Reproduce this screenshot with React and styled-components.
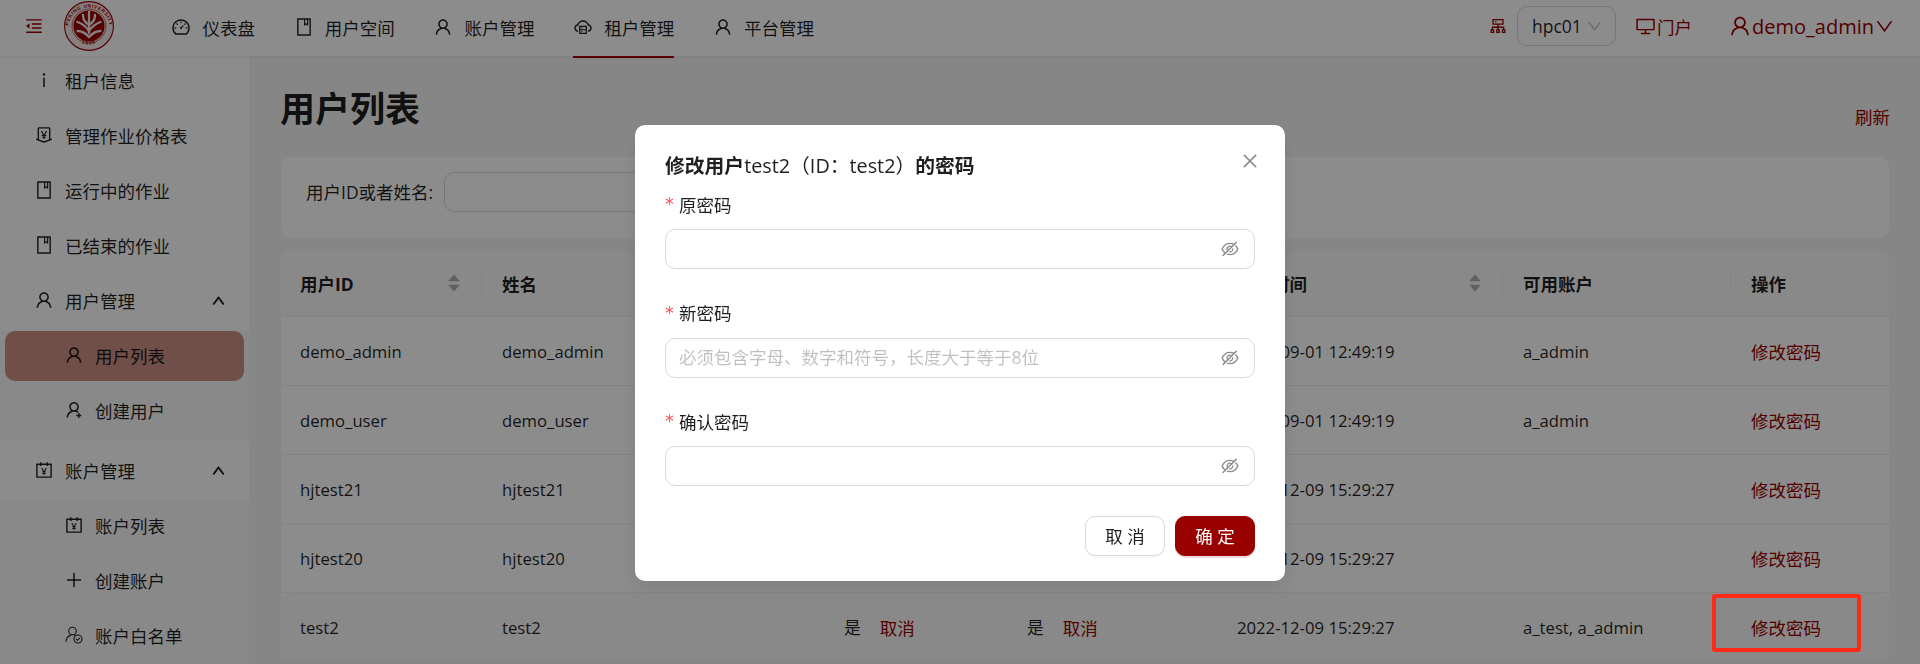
import styled, { createGlobalStyle } from "styled-components";
import {
  AiOutlineMenuFold, AiOutlineDashboard, AiOutlineBook, AiOutlineUser, AiOutlineCloudServer,
  AiOutlineCluster, AiOutlineDesktop, AiOutlineDown, AiOutlineUp, AiOutlineInfo, AiOutlineMoneyCollect,
  AiOutlineUserAdd, AiOutlineAccountBook, AiOutlinePlus, AiOutlineEyeInvisible, AiOutlineClose,
  AiFillCaretUp, AiFillCaretDown,
} from "react-icons/ai";

const RED = "#990000";

const GlobalStyle = createGlobalStyle`
  html, body { margin: 0; height: 100%; overflow: hidden; background: #f5f5f5; }
  body {
    font-family: "Open Sans", "Noto Sans CJK SC", sans-serif;
    font-size: 17.5px;
    color: rgba(0, 0, 0, 0.88);
  }
  * { box-sizing: border-box; }
`;

const navItems = [
  { icon: <AiOutlineDashboard />, label: "仪表盘" },
  { icon: <AiOutlineBook />, label: "用户空间" },
  { icon: <AiOutlineUser />, label: "账户管理" },
  { icon: <AiOutlineCloudServer />, label: "租户管理", active: true },
  { icon: <AiOutlineUser />, label: "平台管理" },
];

const users = [
  { id: "demo_admin", name: "demo_admin", time: "2022-09-01 12:49:19", accounts: "a_admin" },
  { id: "demo_user", name: "demo_user", time: "2022-09-01 12:49:19", accounts: "a_admin" },
  { id: "hjtest21", name: "hjtest21", time: "2022-12-09 15:29:27", accounts: "" },
  { id: "hjtest20", name: "hjtest20", time: "2022-12-09 15:29:27", accounts: "" },
  { id: "test2", name: "test2", time: "2022-12-09 15:29:27", accounts: "a_test, a_admin" },
];

function Logo() {
  return (
    <LogoSvg viewBox="0 0 50 50">
      <circle cx="25" cy="25" r="24.4" fill="#f6eaea" stroke={RED} strokeWidth="1.1" />
      <circle cx="25" cy="25" r="17" fill="none" stroke={RED} strokeWidth="0.6" />
      <path id="sealTop" d="M4.5 27a20.5 20.5 0 0 1 41 0" fill="none" />
      <path id="sealBottom" d="M10 36a18.5 18.5 0 0 0 30 0" fill="none" />
      <text fontSize="5" fontWeight="700" fill={RED} fontFamily="Liberation Sans, sans-serif" letterSpacing="0.5">
        <textPath href="#sealTop" startOffset="50%" textAnchor="middle">PEKING UNIVERSITY</textPath>
      </text>
      <text fontSize="5" fontWeight="700" fill={RED} fontFamily="Liberation Sans, sans-serif" letterSpacing="1">
        <textPath href="#sealBottom" startOffset="50%" textAnchor="middle">1898</textPath>
      </text>
      <circle cx="25" cy="25" r="15.6" fill={RED} />
      <g fill="none" stroke="#f6eaea" strokeWidth="2.3" strokeLinecap="round">
        <path d="M25 11v21" />
        <path d="M19 14c0 5 2 7 6 10c4-3 6-5 6-10" />
        <path d="M13.5 21c3 1 8 4 11.5 9c3.500-5 8.500-8 11.500-9" />
        <path d="M13.500 30c4 0 8 2 11.500 6c3.500-4 7.500-6 11.500-6" />
      </g>
    </LogoSvg>
  );
}

function UserCheckIcon() {
  return (
    <svg viewBox="0 0 20 20" fill="none" stroke="currentColor" strokeWidth="1.100">
      <circle cx="8.500" cy="6" r="3.800" />
      <path d="M2 17c0-3.600 2-6 5-6.900M10 10c.7.200 1.200.4 1.700.7" />
      <circle cx="14" cy="14" r="4" />
      <path d="M12.200 14l1.300 1.300 2.300-2.400" />
    </svg>
  );
}

function PasswordField({ label, placeholder }) {
  return (
    <Field>
      <FieldLabel><Star>*</Star>{label}</FieldLabel>
      <PasswordBox>
        <PasswordInput type="password" placeholder={placeholder} />
        <AiOutlineEyeInvisible />
      </PasswordBox>
    </Field>
  );
}

export default function App() {
  return (
    <>
      <GlobalStyle />
      <Header>
        <MenuToggle><AiOutlineMenuFold /></MenuToggle>
        <Logo />
        <Nav>
          {navItems.map((item) => (
            <NavItem key={item.label} $active={item.active}>
              {item.icon}
              <span>{item.label}</span>
            </NavItem>
          ))}
        </Nav>
        <HeaderRight>
          <ClusterIcon><AiOutlineCluster /></ClusterIcon>
          <ClusterSelect>hpc01<AiOutlineDown /></ClusterSelect>
          <PortalLink><AiOutlineDesktop />门户</PortalLink>
          <UserMenu><AiOutlineUser />demo_admin<AiOutlineDown /></UserMenu>
        </HeaderRight>
      </Header>

      <Body>
        <Sidebar>
          <SideItem><AiOutlineInfo />租户信息</SideItem>
          <SideItem><AiOutlineMoneyCollect />管理作业价格表</SideItem>
          <SideItem><AiOutlineBook />运行中的作业</SideItem>
          <SideItem><AiOutlineBook />已结束的作业</SideItem>
          <SideItem><AiOutlineUser />用户管理<Chevron><AiOutlineUp /></Chevron></SideItem>
          <SubMenu>
            <SideItem $sub $selected><AiOutlineUser />用户列表</SideItem>
            <SideItem $sub><AiOutlineUserAdd />创建用户</SideItem>
          </SubMenu>
          <SideItem><AiOutlineAccountBook />账户管理<Chevron><AiOutlineUp /></Chevron></SideItem>
          <SubMenu>
            <SideItem $sub><AiOutlineAccountBook />账户列表</SideItem>
            <SideItem $sub><AiOutlinePlus />创建账户</SideItem>
            <SideItem $sub><UserCheckIcon />账户白名单</SideItem>
          </SubMenu>
        </Sidebar>

        <Main>
          <PageHead>
            <PageTitle>用户列表</PageTitle>
            <RefreshLink>刷新</RefreshLink>
          </PageHead>
          <SearchCard>
            <SearchLabel>用户ID或者姓名:</SearchLabel>
            <SearchInput />
          </SearchCard>
          <TableCard>
            <HeadRow>
              <HeadCell>用户ID<SortIcon><AiFillCaretUp /><AiFillCaretDown /></SortIcon></HeadCell>
              <HeadCell>姓名</HeadCell>
              <HeadCell>租户管理员</HeadCell>
              <HeadCell>财务人员</HeadCell>
              <HeadCell>创建时间<SortIcon><AiFillCaretUp /><AiFillCaretDown /></SortIcon></HeadCell>
              <HeadCell>可用账户</HeadCell>
              <HeadCell $last>操作</HeadCell>
            </HeadRow>
            {users.map((user, i) => (
              <Row key={user.id} $hover={i === users.length - 1}>
                <Cell>{user.id}</Cell>
                <Cell>{user.name}</Cell>
                <Cell>是<RowLink>取消</RowLink></Cell>
                <Cell>是<RowLink>取消</RowLink></Cell>
                <Cell>{user.time}</Cell>
                <Cell>{user.accounts}</Cell>
                <Cell><RowLink $flush>修改密码</RowLink></Cell>
              </Row>
            ))}
          </TableCard>
        </Main>
      </Body>

      <Mask>
        <Modal>
          <CloseButton><AiOutlineClose /></CloseButton>
          <ModalTitle><b>修改用户</b>test2（ID：test2）<b>的密码</b></ModalTitle>
          <PasswordField label="原密码" />
          <PasswordField label="新密码" placeholder="必须包含字母、数字和符号，长度大于等于8位" />
          <PasswordField label="确认密码" />
          <ModalFooter>
            <Button>取 消</Button>
            <Button $primary>确 定</Button>
          </ModalFooter>
        </Modal>
      </Mask>
      <Callout />
    </>
  );
}

const Header = styled.header`
  height: 56px;
  background: #fff;
  display: flex;
  align-items: center;
  padding: 0 25px 4px 24px;
  box-shadow: 0 1px 4px rgba(0, 0, 0, 0.08);
  position: relative;
`;

const MenuToggle = styled.div`
  display: flex;
  color: ${RED};
  font-size: 20px;
  margin-right: 19px;
`;

const LogoSvg = styled.svg`
  width: 52px;
  height: 50px;
  flex: none;
`;

const Nav = styled.nav`
  display: flex;
  margin-left: 37px;
  align-self: stretch;
  margin-bottom: -4px;
`;

const NavItem = styled.div`
  display: flex;
  align-items: center;
  gap: 11px;
  margin: 1px 19.4px 0;
  padding-bottom: 3px;
  border-bottom: 2px solid ${(p) => (p.$active ? RED : "transparent")};
  height: 57px;
  svg { font-size: 20px; }
`;

const HeaderRight = styled.div`
  margin-left: auto;
  display: flex;
  align-items: center;
  color: ${RED};
`;

const ClusterIcon = styled.div`
  display: flex;
  font-size: 20px;
  margin-right: 9px;
`;

const ClusterSelect = styled.div`
  width: 99px;
  height: 40px;
  border: 1px solid #d9d9d9;
  border-radius: 10px;
  display: flex;
  align-items: center;
  justify-content: space-between;
  padding: 0 12px 0 14px;
  color: rgba(0, 0, 0, 0.88);
  svg { font-size: 17px; color: rgba(0, 0, 0, 0.25); }
`;

const PortalLink = styled.div`
  display: flex;
  align-items: center;
  gap: 1px;
  margin-left: 19px;
  svg { font-size: 21px; }
`;

const UserMenu = styled.div`
  display: flex;
  align-items: center;
  margin-left: 36px;
  font-size: 20px;
  svg { font-size: 24px; }
  svg:last-child { font-size: 21px; }
`;

const Body = styled.div`
  display: flex;
  height: 608px;
  overflow: hidden;
`;

const Sidebar = styled.aside`
  width: 249px;
  flex: none;
  background: #fff;
  display: flex;
  flex-direction: column;
  gap: 5px;
`;

const SubMenu = styled.div`
  background: #fafafa;
  display: flex;
  flex-direction: column;
  gap: 5px;
  padding-bottom: 5px;
  flex: none;
`;

const SideItem = styled.div`
  height: 50px;
  flex: none;
  margin: 0 5px;
  padding: 0 0 2px ${(p) => (p.$sub ? "59px" : "29px")};
  display: flex;
  align-items: center;
  gap: 11px;
  border-radius: 10px;
  background: ${(p) => (p.$selected ? "#cb9084" : "transparent")};
  svg { width: 20px; height: 20px; flex: none; }
`;

const Chevron = styled.div`
  margin-left: auto;
  margin-right: 18px;
  display: flex;
  svg { width: 15px; height: 15px; stroke: currentColor; stroke-width: 50px; }
`;

const Main = styled.main`
  flex: 1;
  padding: 0 31px 0 32px;
`;

const PageHead = styled.div`
  display: flex;
  justify-content: space-between;
  align-items: flex-end;
  height: 81px;
  padding: 28px 0 8px;
  margin-bottom: 20px;
`;

const PageTitle = styled.h1`
  margin: 0 0 -4px -1px;
  font-size: 35px;
  font-weight: 700;
  line-height: 49px;
`;

const RefreshLink = styled.a`
  color: ${RED};
  margin-right: -1px;
`;

const RowLink = styled.a`
  color: ${RED};
  font-size: 17.5px;
  margin-left: ${(p) => (p.$flush ? "0" : "19px")};
`;

const SearchCard = styled.div`
  height: 81px;
  background: #fff;
  border-radius: 10px;
  padding: 15px 25px;
  display: flex;
  align-items: flex-start;
  margin-bottom: 12px;
`;

const SearchLabel = styled.label`
  line-height: 40px;
  width: 138px;
  flex: none;
`;

const SearchInput = styled.input`
  width: 300px;
  height: 40px;
  border: 1px solid #d9d9d9;
  border-radius: 10px;
  outline: 0;
`;

const TableCard = styled.div`
  background: #fff;
  border-radius: 10px;
`;

const columns = "201px 342px 183px 210px 286px 228px 158px";

const HeadRow = styled.div`
  display: grid;
  grid-template-columns: ${columns};
  height: 67px;
  background: #fafafa;
  border-radius: 10px 10px 0 0;
  border-bottom: 1px solid #f0f0f0;
  font-weight: 700;
`;

const HeadCell = styled.div`
  position: relative;
  display: flex;
  align-items: center;
  justify-content: space-between;
  padding: 0 20px;
  &:first-child { padding-left: 19px; }
  ${(p) => !p.$last && `
    &::after {
      content: "";
      position: absolute;
      right: 0;
      top: 18px;
      height: 27px;
      width: 1px;
      background: #f0f0f0;
    }
  `}
`;

const SortIcon = styled.span`
  display: flex;
  flex-direction: column;
  color: rgba(0, 0, 0, 0.29);
  svg { font-size: 16px; margin: -3px 0; }
`;

const Row = styled.div`
  display: grid;
  grid-template-columns: ${columns};
  height: 69px;
  background: ${(p) => (p.$hover ? "#fafafa" : "#fff")};
  border-bottom: 1px solid #f0f0f0;
  border-radius: ${(p) => (p.$hover ? "10px" : "0")};
`;

const Cell = styled.div`
  display: flex;
  align-items: center;
  padding: 0 20px;
  font-size: 16.7px;
  white-space: nowrap;
  &:first-child { padding-left: 19px; }
`;

const Mask = styled.div`
  position: fixed;
  inset: 0;
  background: rgba(0, 0, 0, 0.45);
  display: flex;
  justify-content: center;
  padding-top: 125px;
`;

const Modal = styled.div`
  position: relative;
  width: 650px;
  height: 456px;
  background: #fff;
  border-radius: 10px;
  padding: 25px 30px 25px;
  box-shadow: 0 7px 20px rgba(0, 0, 0, 0.1);
`;

const CloseButton = styled.div`
  position: absolute;
  top: 26px;
  right: 25px;
  display: flex;
  font-size: 20px;
  color: rgba(0, 0, 0, 0.45);
`;

const ModalTitle = styled.h2`
  margin: 0 0 8px;
  font-size: 19.8px;
  font-weight: 400;
  line-height: 32px;
  b { font-weight: 700; }
`;

const Field = styled.div`
  margin-bottom: 29.5px;
  &:last-of-type { margin-bottom: 30px; }
`;

const FieldLabel = styled.div`
  height: 28px;
  margin-bottom: 11px;
  display: flex;
  align-items: center;
`;

const Star = styled.span`
  color: #ff4d4f;
  width: 14px;
  font-family: "DejaVu Sans", sans-serif;
`;

const PasswordBox = styled.div`
  height: 40px;
  border: 1px solid #d9d9d9;
  border-radius: 10px;
  display: flex;
  align-items: center;
  padding: 0 14px 0 13px;
  svg { font-size: 20px; color: rgba(0, 0, 0, 0.45); flex: none; }
`;

const PasswordInput = styled.input`
  flex: 1;
  border: 0;
  outline: 0;
  font: inherit;
  min-width: 0;
  padding: 0 1px 2px 0;
  &::placeholder { color: rgba(0, 0, 0, 0.25); }
`;

const ModalFooter = styled.div`
  display: flex;
  justify-content: flex-end;
  gap: 10px;
`;

const Button = styled.button`
  width: 80px;
  height: 40px;
  padding: 0;
  border-radius: 10px;
  font: inherit;
  border: 1px solid ${(p) => (p.$primary ? RED : "#d9d9d9")};
  background: ${(p) => (p.$primary ? RED : "#fff")};
  color: ${(p) => (p.$primary ? "#fff" : "rgba(0, 0, 0, 0.88)")};
  box-shadow: 0 2px 0 ${(p) => (p.$primary ? "rgba(153, 0, 0, 0.15)" : "rgba(0, 0, 0, 0.02)")};
`;

const Callout = styled.div`
  position: fixed;
  left: 1712px;
  top: 594px;
  width: 149px;
  height: 58px;
  border: 4px solid #ff2a16;
  border-radius: 3px;
`;
